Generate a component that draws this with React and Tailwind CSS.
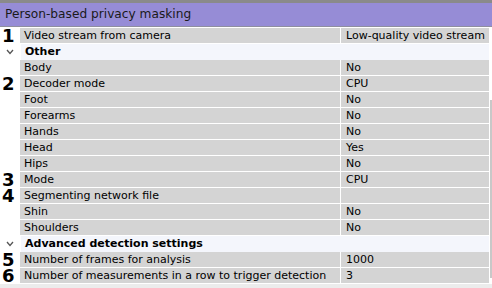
import React from 'react';

const rows = [
  { num: '1', name: 'Video stream from camera', value: 'Low-quality video stream' },
  { group: 'Other' },
  { name: 'Body', value: 'No' },
  { num: '2', name: 'Decoder mode', value: 'CPU' },
  { name: 'Foot', value: 'No' },
  { name: 'Forearms', value: 'No' },
  { name: 'Hands', value: 'No' },
  { name: 'Head', value: 'Yes' },
  { name: 'Hips', value: 'No' },
  { num: '3', name: 'Mode', value: 'CPU' },
  { num: '4', name: 'Segmenting network file', value: '' },
  { name: 'Shin', value: 'No' },
  { name: 'Shoulders', value: 'No' },
  { group: 'Advanced detection settings' },
  { num: '5', name: 'Number of frames for analysis', value: '1000' },
  { num: '6', name: 'Number of measurements in a row to trigger detection', value: '3' },
];

function Chevron() {
  return (
    <svg width="8" height="6" viewBox="0 0 8 6" className="ml-[6px]">
      <polyline points="1,1 4,4.5 7,1" fill="none" stroke="#555" strokeWidth="1.3" />
    </svg>
  );
}

function Row({ row }) {
  if (row.group) {
    return (
      <div className="flex h-[16px]">
        <div className="w-[21px] flex items-center bg-white">
          <Chevron />
        </div>
        <div className="flex-1 bg-[#f4f6fc] pl-[4px] font-bold leading-[16px]">{row.group}</div>
      </div>
    );
  }
  return (
    <div className="flex h-[16px] pb-[1px] gap-[1px]">
      <div className="w-[20px] -mr-[1px] bg-white pl-[2px] font-['DejaVu_Sans',sans-serif] font-bold text-[18px] leading-[15px] text-black">
        {row.num || ''}
      </div>
      <div className="flex-1 bg-[#d4d4d4] pl-[4px] leading-[15px] whitespace-nowrap overflow-hidden">{row.name}</div>
      <div className="w-[148px] bg-[#d4d4d4] pl-[5px] leading-[15px] whitespace-nowrap overflow-hidden">{row.value}</div>
    </div>
  );
}

export default function App() {
  return (
    <div className="w-[492px] h-[288px] overflow-hidden bg-[#ececec] font-['DejaVu_Sans',sans-serif] text-[11px] text-black">
      <div className="h-[3px] bg-[#8a8a8a]" />
      <div className="h-[24px] bg-[#968cd6] pl-[5px] text-[12.2px] leading-[23px] text-[#1a1a1a] border-b border-[#8f8f9f]">
        Person-based privacy masking
      </div>
      <div className="flex bg-white pt-[1px]">
        <div className="w-[489px]">
          {rows.map((row, i) => (
            <Row key={i} row={row} />
          ))}
        </div>
        <div className="w-[3px] pl-[1px] bg-white">
          <div className="mt-[72px] h-[178px] bg-[#c8c8c8]" />
        </div>
      </div>
    </div>
  );
}
